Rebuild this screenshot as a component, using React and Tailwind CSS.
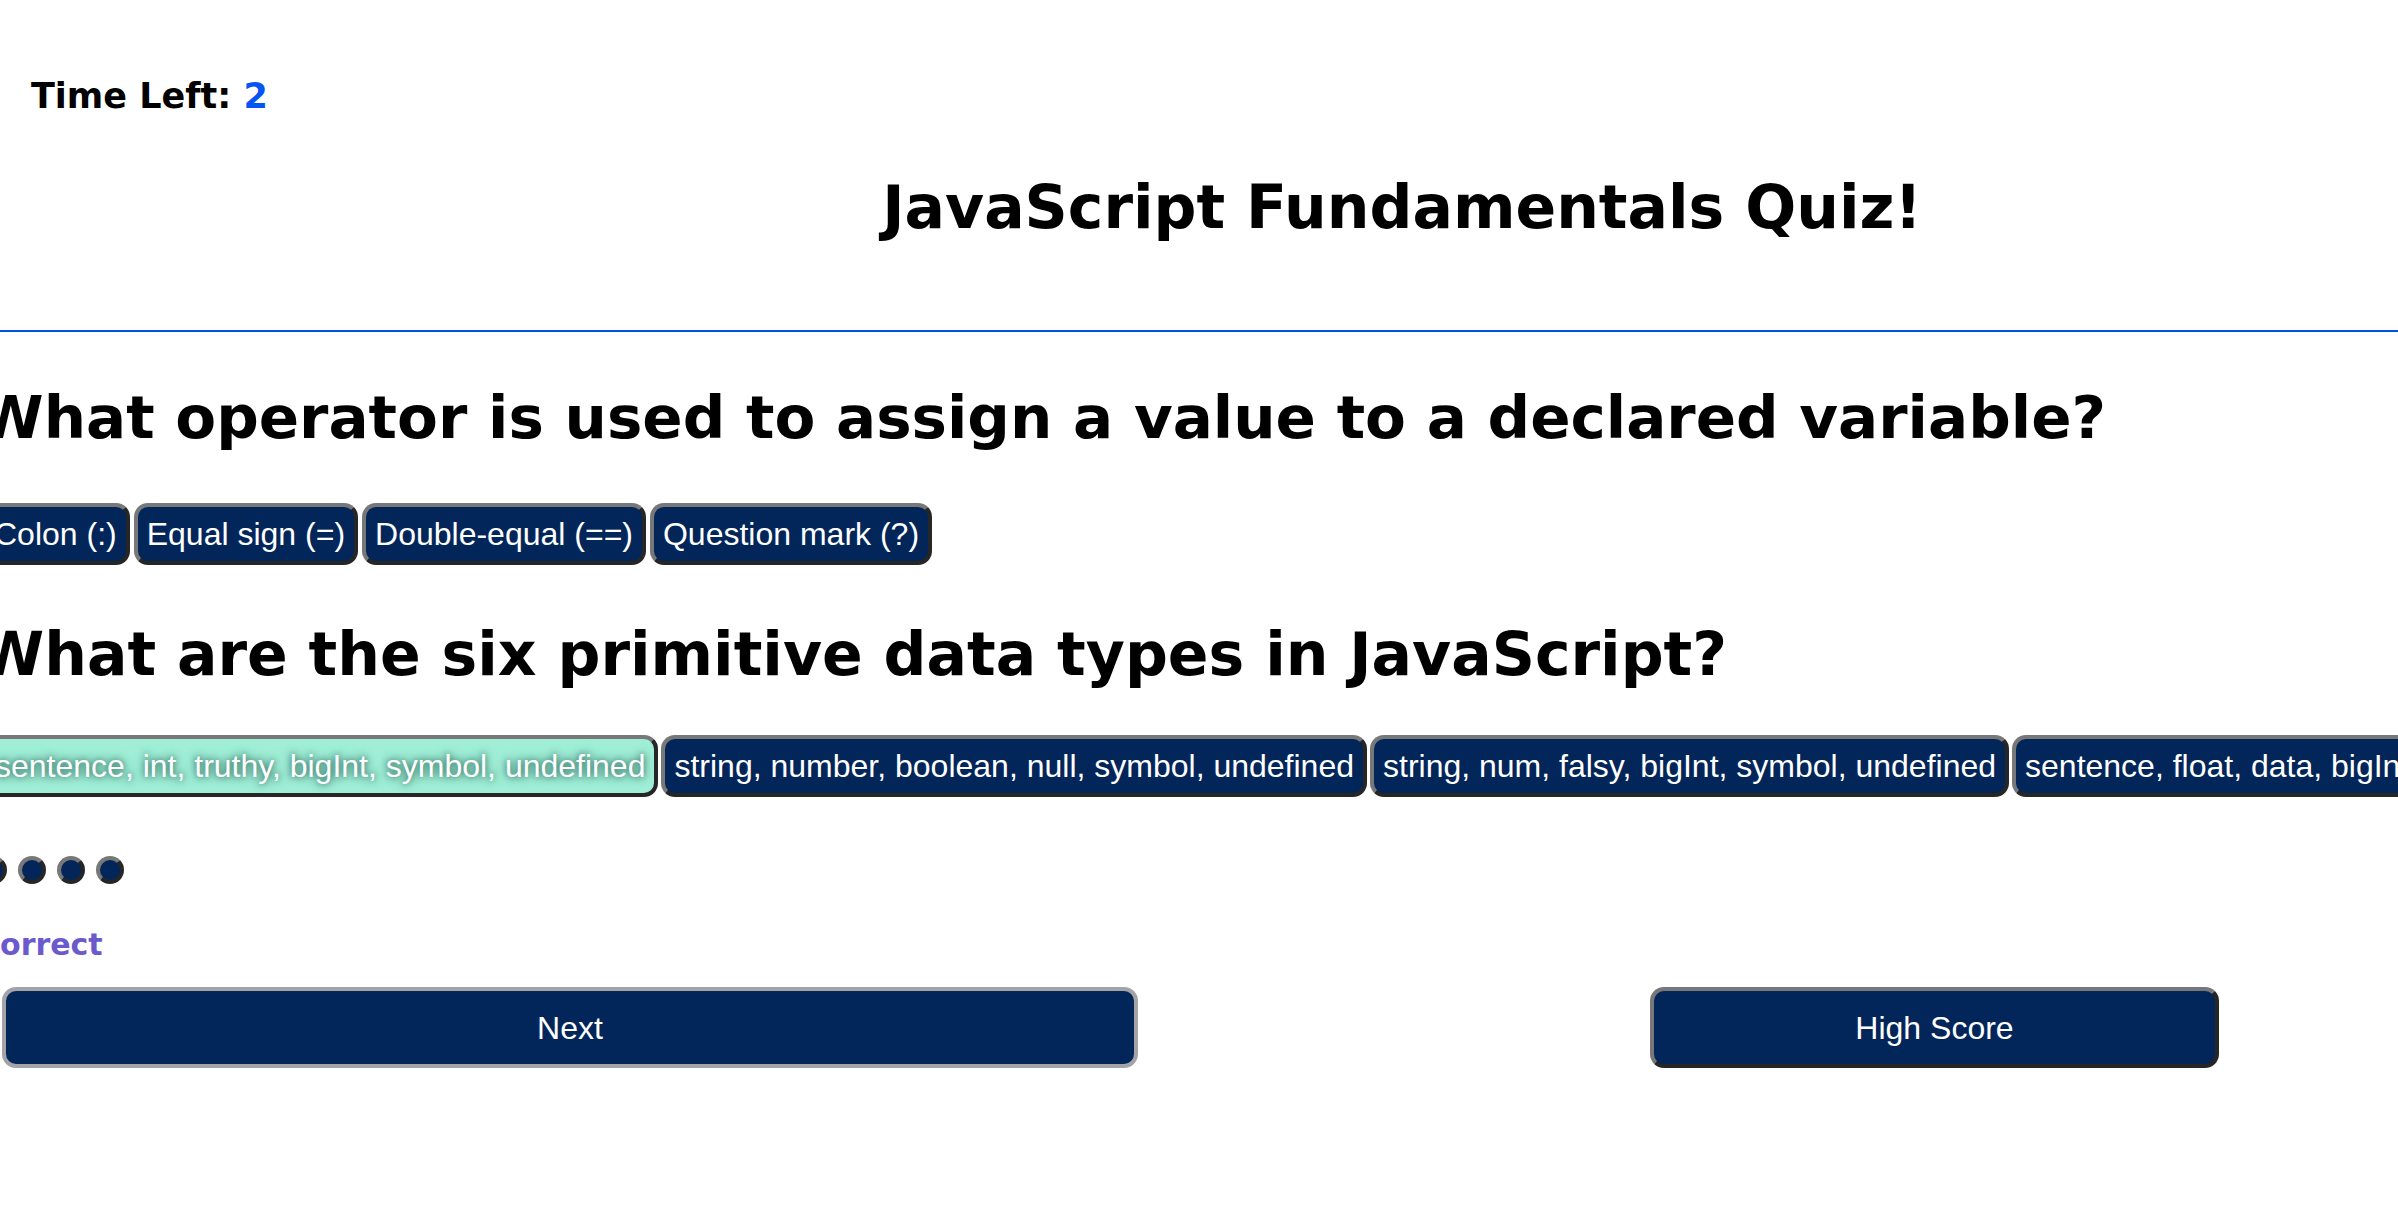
import React from 'react';

const navyBtn =
  'shrink-0 whitespace-nowrap bg-[#022659] text-white rounded-[14px] border-[4px] border-t-[#787878] border-l-[#787878] border-r-[#262626] border-b-[#262626] px-[9px] py-[8px] text-[32px] leading-[38px]';

const firstAnswers = ['Colon (:)', 'Equal sign (=)', 'Double-equal (==)', 'Question mark (?)'];

const secondAnswers = [
  'string, number, boolean, null, symbol, undefined',
  'string, num, falsy, bigInt, symbol, undefined',
  'sentence, float, data, bigInt, symbol, undefined',
];

const App = () => {
  return (
    <div className="w-[2398px] h-[1226px] overflow-hidden bg-white text-black font-['DejaVu_Sans',Verdana,sans-serif]">
      <header>
        <div className="pt-[76px] pl-[31px] h-[116px] text-[35px] leading-[40px] font-bold">
          Time Left: <span className="text-[#0555f2]">2</span>
        </div>
        <h1 className="mt-[56px] pl-[406px] text-center text-[60px] leading-[70px] font-bold whitespace-nowrap">
          JavaScript Fundamentals Quiz!
        </h1>
      </header>

      <div className="mt-[88px] border-t-2 border-[#0052dd]" />

      <main className="-ml-[22px] font-bold">
        <h2 className="mt-[51px] text-[59.5px] leading-[70px] whitespace-nowrap">
          What operator is used to assign a value to a declared variable?
        </h2>
        <div className="mt-[50px] ml-[3px] flex gap-[4px] font-['Liberation_Sans',Arial,sans-serif] font-normal">
          {firstAnswers.map((a) => (
            <button key={a} className={navyBtn}>
              {a}
            </button>
          ))}
        </div>

        <h2 className="mt-[54px] text-[60px] leading-[70px] whitespace-nowrap">
          What are the six primitive data types in JavaScript?
        </h2>
        <div className="mt-[46px] ml-[4px] flex gap-[3px] font-['Liberation_Sans',Arial,sans-serif] font-normal">
          <button className="shrink-0 whitespace-nowrap bg-[#a0eed6] text-white rounded-[14px] border-[4px] border-t-[#787878] border-l-[#787878] border-r-[#262626] border-b-[#262626] px-[9px] py-[8px] text-[32px] leading-[38px] [text-shadow:0_0_6px_#2f6f60,0_0_12px_#4f8f80]">
            sentence, int, truthy, bigInt, symbol, undefined
          </button>
          {secondAnswers.map((a) => (
            <button key={a} className={navyBtn}>
              {a}
            </button>
          ))}
        </div>

        <div className="mt-[59px] ml-[1px] flex gap-[11px]">
          {[0, 1, 2, 3].map((i) => (
            <span
              key={i}
              className="block w-[28px] h-[28px] rounded-full bg-[#022659] border-[4px] border-t-[#787878] border-l-[#787878] border-r-[#262626] border-b-[#262626]"
            />
          ))}
        </div>

        <p className="mt-[42px] text-[30px] leading-[37px] text-[#6a5acd]">Correct</p>
      </main>

      <div className="mt-[24px] flex font-['Liberation_Sans',Arial,sans-serif]">
        <button className="ml-[2px] w-[1136px] h-[81px] bg-[#022659] text-white text-[32px] rounded-[14px] border-[4px] border-[#a3a3a8]">
          Next
        </button>
        <button className="ml-[512px] w-[569px] h-[81px] bg-[#022659] text-white text-[32px] rounded-[14px] border-[4px] border-t-[#787878] border-l-[#787878] border-r-[#262626] border-b-[#262626]">
          High Score
        </button>
      </div>
    </div>
  );
};

export default App;
